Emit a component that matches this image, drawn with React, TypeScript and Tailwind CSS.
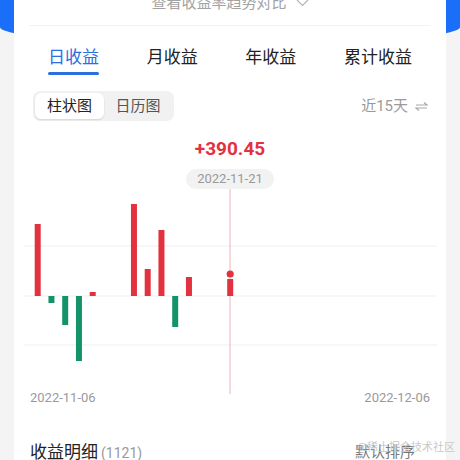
import React from "react";

type Bar = { i: number; v: number };

// value in px above (positive) or below (negative) the zero line
const bars: Bar[] = [
	{ i: 0, v: 72 },
	{ i: 1, v: -7 },
	{ i: 2, v: -29 },
	{ i: 3, v: -65 },
	{ i: 4, v: 4 },
	{ i: 7, v: 92 },
	{ i: 8, v: 27 },
	{ i: 9, v: 66 },
	{ i: 10, v: -31 },
	{ i: 11, v: 19 },
];

const ZERO = 107;
const barX = (i: number) => 20.7 + 13.75 * i;

function Chart() {
	return (
		<svg width="432" height="201" viewBox="0 0 432 201" className="block overflow-visible">
			{[57, 107, 156].map((y) => (
				<line key={y} x1="10" x2="423" y1={y} y2={y} stroke="#efefef" strokeWidth="1" />
			))}
			<line x1="216" x2="216" y1="0" y2="205" stroke="#ecb6bb" strokeWidth="1" />
			{bars.map((b) => (
				<rect
					key={b.i}
					x={barX(b.i)}
					y={b.v > 0 ? ZERO - b.v : ZERO}
					width="6"
					height={Math.abs(b.v)}
					fill={b.v > 0 ? "#e2313f" : "#14936b"}
				/>
			))}
			<rect x={barX(14)} y="90" width="6" height="17" fill="#e2313f" />
			<circle cx={barX(14) + 3} cy="85" r="3.6" fill="#e2313f" />
		</svg>
	);
}

function Tab({ label, active }: { label: string; active?: boolean }) {
	return (
		<div className="flex flex-col items-center">
			<span className={`text-[17px] leading-[24px] ${active ? "text-[#2b6fe0]" : "text-[#222]"}`}>{label}</span>
			<span className={`mt-[3px] h-[3px] w-full rounded-full ${active ? "bg-[#2b6fe0]" : "bg-transparent"}`} />
		</div>
	);
}

export default function App() {
	return (
		<div
			className="relative h-[460px] w-[460px] overflow-hidden bg-[#f4f4f4]"
			style={{ fontFamily: 'Roboto, "Noto Sans CJK SC", sans-serif' }}
		>
			<div className="h-[45px] rounded-b-[50%_18px] bg-[#1b6ef7]" />

			<div className="mx-[14px] -mt-[45px] flow-root bg-white">
				<div className="-mt-[9px] flex h-[24px] items-center justify-center gap-[9px] text-[15px] text-[#a3a3a3]">
					<span>查看收益率趋势对比</span>
					<svg width="13" height="8" viewBox="0 0 13 8" fill="none">
						<path d="M1 1l5.5 5.5L12 1" stroke="#b5b5b5" strokeWidth="1.2" />
					</svg>
				</div>
				<div className="mx-[15px] mt-[10px] h-px bg-[#f3f3f3]" />

				<div className="mt-[19px] flex justify-between px-[34px]">
					<Tab label="日收益" active />
					<Tab label="月收益" />
					<Tab label="年收益" />
					<Tab label="累计收益" />
				</div>

				<div className="mt-[16px] flex items-center justify-between pl-[19px] pr-[18px]">
					<div className="flex h-[30px] w-[141px] items-center rounded-[7px] bg-[#f1f1f1] p-[2px]">
						<div className="flex h-[26px] w-[69px] items-center justify-center rounded-[6px] bg-white text-[15px] text-[#222] shadow-[0_1px_2px_rgba(0,0,0,0.12)]">
							柱状图
						</div>
						<div className="flex flex-1 items-center justify-center text-[15px] text-[#555]">日历图</div>
					</div>
					<div className="flex items-center gap-[7px] text-[15px] text-[#9a9a9a]">
						<span>近15天</span>
						<svg width="13" height="9" viewBox="0 0 13 9" fill="none" stroke="#a8a8a8" strokeWidth="1.2">
							<path d="M1 3h11L9 0.5" />
							<path d="M12 6H1l3 2.5" />
						</svg>
					</div>
				</div>

				<div className="mt-[16px] text-center text-[19px] font-bold leading-[24px] text-[#e2313f]">+390.45</div>
				<div className="mt-[8px] flex justify-center">
					<div className="flex h-[20px] w-[88px] items-center justify-center rounded-full bg-[#f2f2f2] text-[13px] text-[#999]">
						2022-11-21
					</div>
				</div>

				<Chart />

				<div className="-mt-px flex justify-between px-[16px] text-[13px] leading-[17px] text-[#9a9a9a]">
					<span>2022-11-06</span>
					<span>2022-12-06</span>
				</div>

				<div className="mt-[34px] flex items-center justify-between pl-[16px] pr-[31px]">
					<div className="flex items-baseline">
						<span className="text-[17px] leading-[24px] text-[#222]">收益明细</span>
						<span className="ml-[3px] text-[14px] text-[#999]">(1121)</span>
					</div>
					<span className="text-[15px] text-[#777]">默认排序</span>
				</div>
				<div className="h-[20px]" />
			</div>

			<div className="absolute bottom-[4px] right-[5px] text-[11px] text-[#c4c4c4] opacity-90">@稀土掘金技术社区</div>
		</div>
	);
}
